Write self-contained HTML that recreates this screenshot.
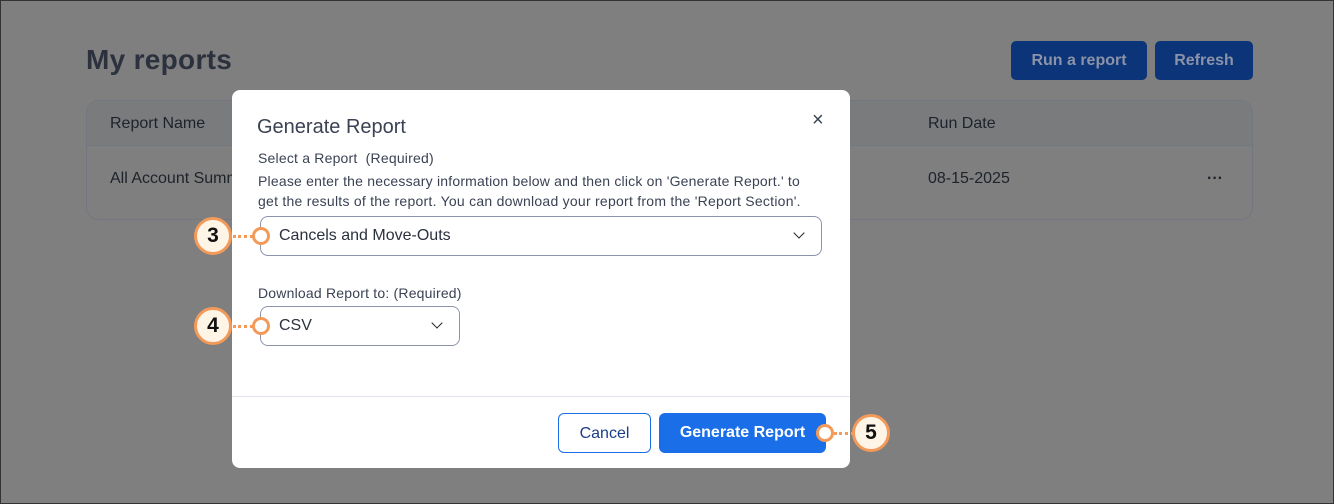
<!DOCTYPE html>
<html><head><meta charset="utf-8"><style>
*{box-sizing:border-box;margin:0;padding:0}
body{width:1334px;height:504px;overflow:hidden;background:#7f7f7f;font-family:"Liberation Sans",sans-serif;position:relative;color:#1f2530}
.frame{position:absolute;left:0;top:0;width:1334px;height:504px;border:1px solid #333;pointer-events:none;z-index:10}
h1{position:absolute;left:86px;top:44px;font-size:28px;font-weight:bold;color:#2b313d;letter-spacing:0.3px}
.btn{position:absolute;top:41px;height:39px;background:#0c3478;border-radius:5px;color:#8a93a8;font-weight:bold;font-size:16px;text-align:center;line-height:39px}
.table{position:absolute;left:86px;top:100px;width:1167px;height:120px;border:1px solid #737780;border-radius:12px;overflow:hidden}
.th{height:45px;background:#7a7b7d;border-bottom:1px solid #737780}
.t{position:absolute;font-size:16px;color:#1e222a}
.modal{position:absolute;left:232px;top:90px;width:618px;height:378px;background:#fff;border-radius:8px}
.mt{position:absolute;left:25px;top:26px;font-size:20px;color:#3a4253;font-weight:normal}
.lbl{position:absolute;left:26px;font-size:14px;color:#3a4253;white-space:nowrap}
.sel{position:absolute;border:1px solid #8c93ad;border-radius:8px;background:#fff;font-size:16px;color:#2b313d;padding-left:18px}
.chev{position:absolute;width:8px;height:8px;border-right:1.8px solid #222;border-bottom:1.8px solid #222;transform:rotate(45deg)}
.foot{position:absolute;left:0;top:306px;width:618px;border-top:1px solid #e1e4ea}
.b2{position:absolute;top:323px;height:40px;border-radius:6px;font-size:16px;text-align:center;line-height:40px}
.mark{position:absolute;width:38px;height:38px;border-radius:50%;background:#fff5e6;border:3px solid #f39a5a;font-weight:bold;font-size:21px;text-align:center;line-height:32px;color:#111}
.dot{position:absolute;width:18px;height:18px;border-radius:50%;border:3px solid #f39a5a;background:#fff}
.dash{position:absolute;height:3px;border-top:3px dotted #f39a5a}
</style></head><body>
<h1>My reports</h1>
<div class="btn" style="left:1011px;width:136px">Run a report</div>
<div class="btn" style="left:1155px;width:98px">Refresh</div>
<div class="table"><div class="th"></div></div>
<div class="t" style="left:110px;top:115px">Report Name</div>
<div class="t" style="left:928px;top:115px">Run Date</div>
<div class="t" style="left:110px;top:170px">All Account Summary</div>
<div class="t" style="left:928px;top:170px">08-15-2025</div>
<div class="t" style="left:1207px;top:170px;font-weight:bold">···</div>

<div class="modal">
<div class="mt">Generate Report</div>
<div style="position:absolute;left:580px;top:20px;font-size:20px;color:#3a4253;line-height:20px">×</div>
<div class="lbl" style="top:60px;letter-spacing:0.2px">Select a Report&nbsp; (Required)</div>
<div class="lbl" style="top:83px;letter-spacing:0.2px">Please enter the necessary information below and then click on 'Generate Report.' to</div>
<div class="lbl" style="top:103px;letter-spacing:0.25px">get the results of the report. You can download your report from the 'Report Section'.</div>
<div class="sel" style="left:28px;top:126px;width:562px;height:40px;line-height:38px">Cancels and Move-Outs<span class="chev" style="right:18px;top:12px"></span></div>
<div class="lbl" style="top:195px;letter-spacing:0.2px">Download Report to: (Required)</div>
<div class="sel" style="left:28px;top:216px;width:200px;height:40px;line-height:38px">CSV<span class="chev" style="right:18px;top:12px"></span></div>
<div class="foot"></div>
<div class="b2" style="left:326px;width:93px;border:1px solid #1a6fe8;color:#1a3d8a">Cancel</div>
<div class="b2" style="left:427px;width:167px;background:#1a6fe8;color:#fff;font-weight:bold">Generate Report</div>
</div>

<div class="mark" style="left:194px;top:217px">3</div>
<div class="dash" style="left:233px;top:235px;width:20px"></div>
<div class="dot" style="left:252px;top:227px"></div>
<div class="mark" style="left:194px;top:307px">4</div>
<div class="dash" style="left:233px;top:325px;width:20px"></div>
<div class="dot" style="left:252px;top:317px"></div>
<div class="dot" style="left:816px;top:424px"></div>
<div class="dash" style="left:834px;top:432px;width:20px"></div>
<div class="mark" style="left:852px;top:414px">5</div>
<div class="frame"></div>
</body></html>
